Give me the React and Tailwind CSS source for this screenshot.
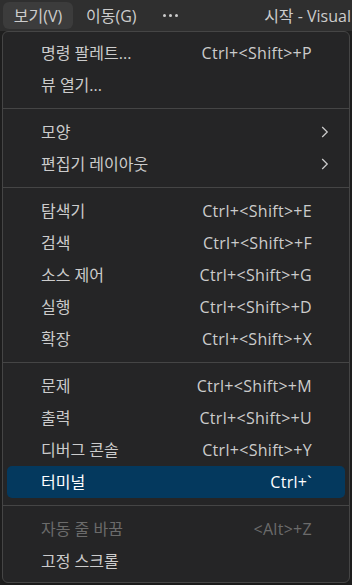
import React from 'react';

const font = { fontFamily: '"Open Sans", "Noto Sans CJK KR", sans-serif' };

const groups = [
  [
    { label: '명령 팔레트...', keys: 'Ctrl+<Shift>+P' },
    { label: '뷰 열기...' },
  ],
  [
    { label: '모양', sub: true },
    { label: '편집기 레이아웃', sub: true },
  ],
  [
    { label: '탐색기', keys: 'Ctrl+<Shift>+E' },
    { label: '검색', keys: 'Ctrl+<Shift>+F' },
    { label: '소스 제어', keys: 'Ctrl+<Shift>+G' },
    { label: '실행', keys: 'Ctrl+<Shift>+D' },
    { label: '확장', keys: 'Ctrl+<Shift>+X' },
  ],
  [
    { label: '문제', keys: 'Ctrl+<Shift>+M' },
    { label: '출력', keys: 'Ctrl+<Shift>+U' },
    { label: '디버그 콘솔', keys: 'Ctrl+<Shift>+Y' },
    { label: '터미널', keys: 'Ctrl+`', active: true },
  ],
  [
    { label: '자동 줄 바꿈', keys: '<Alt>+Z', disabled: true },
    { label: '고정 스크롤' },
  ],
];

const Chevron = () => (
  <svg width="18" height="18" viewBox="0 0 16 16" fill="none" stroke="currentColor" strokeWidth="1.1">
    <path d="M5.5 3.5 L10 8 L5.5 12.5" />
  </svg>
);

const MenuItem = ({ item }) => {
  const color = item.disabled ? 'text-[#6b6b6b]' : item.active ? 'text-white' : 'text-[#cccccc]';
  return (
    <div
      className={`mx-[4px] h-[32px] flex items-center rounded-[5px] pl-[34px] pr-[33px] text-[16px] whitespace-nowrap ${color} ${
        item.active ? 'bg-[#04395e]' : ''
      }`}
    >
      <span className="flex-1">{item.label}</span>
      {item.keys && <span className="tracking-[0.3px]">{item.keys}</span>}
      {item.sub && (
        <span className="-mr-[22px] text-[#cccccc]">
          <Chevron />
        </span>
      )}
    </div>
  );
};

export default function App() {
  return (
    <div className="w-[352px] h-[585px] overflow-hidden bg-[#1f1f1f] flex flex-col" style={font}>
      <div className="h-[31px] bg-[#2f2f2f] flex items-center pl-[3px] text-[16px] text-[#cccccc] shrink-0 whitespace-nowrap overflow-hidden">
        <div className="h-[27px] w-[70px] shrink-0 flex items-center justify-center rounded-[6px] bg-[#3c3c3c]">보기(V)</div>
        <div className="h-[27px] ml-[13px] shrink-0 flex items-center">이동(G)</div>
        <div className="ml-[26px] shrink-0 flex items-center gap-[3px]">
          <span className="w-[3px] h-[3px] rounded-full bg-[#cccccc]" />
          <span className="w-[3px] h-[3px] rounded-full bg-[#cccccc]" />
          <span className="w-[3px] h-[3px] rounded-full bg-[#cccccc]" />
        </div>
        <div className="ml-auto pr-[1px] shrink-0">시작 - Visual</div>
      </div>
      <div className="mx-[2px] flex-1 mb-[2px] rounded-[6px] border border-[#454545] bg-[#252526] pt-[5px] pb-[4px] shadow-lg">
        {groups.map((g, gi) => (
          <div key={gi}>
            {gi > 0 && <div className="h-px bg-[#454545] my-[7px]" />}
            {g.map((item) => (
              <MenuItem key={item.label} item={item} />
            ))}
          </div>
        ))}
      </div>
    </div>
  );
}
